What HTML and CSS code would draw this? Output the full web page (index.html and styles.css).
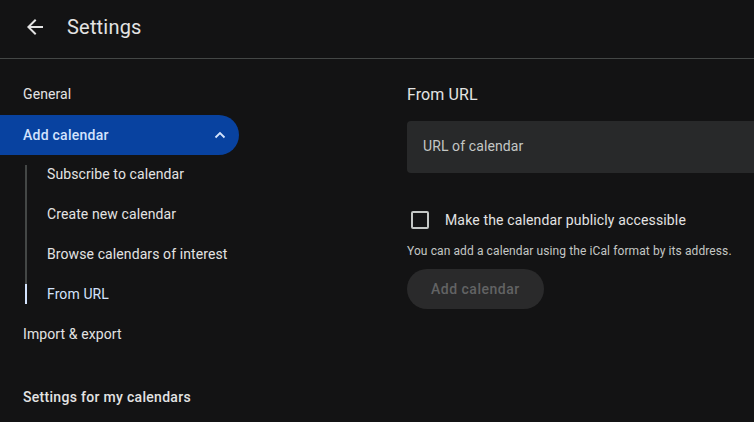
FILE: index.html
```html
<!DOCTYPE html>
<html lang="en">
<head>
<meta charset="utf-8">
<title>Settings</title>
<link rel="stylesheet" href="styles.css">
</head>
<body>
<header class="topbar">
  <button class="back" aria-label="Back">
    <svg width="16" height="16" viewBox="0 0 16 16"><path d="M16 7H3.83l5.59-5.59L8 0 0 8l8 8 1.41-1.41L3.830 9H16z" fill="#e3e3e3"/></svg>
  </button>
  <h1 class="title">Settings</h1>
</header>
<div class="main">
  <nav class="sidebar">
    <div class="nav-item">General</div>
    <div class="nav-item active">
      <span>Add calendar</span>
      <svg class="chev" width="12" height="8" viewBox="0 0 12 8"><path d="M1.5 6.5 6 2l4.5 4.5" fill="none" stroke="#d3e3fd" stroke-width="1.8"/></svg>
    </div>
    <div class="sub-list">
      <div class="sub-item first">Subscribe to calendar</div>
      <div class="sub-item">Create new calendar</div>
      <div class="sub-item">Browse calendars of interest</div>
      <div class="sub-item current">From URL</div>
    </div>
    <div class="nav-item">Import &amp; export</div>
    <div class="nav-item section">Settings for my calendars</div>
  </nav>
  <section class="content">
    <h2 class="heading">From URL</h2>
    <div class="field">URL of calendar</div>
    <label class="check-row">
      <span class="checkbox"></span>
      <span class="check-label">Make the calendar publicly accessible</span>
    </label>
    <p class="helper">You can add a calendar using the iCal format by its address.</p>
    <button class="add-btn">Add calendar</button>
  </section>
</div>
</body>
</html>
```
FILE: styles.css
```css
html, body {
  margin: 0;
  padding: 0;
  background: #131314;
  color: #e3e3e3;
  font-family: Roboto, "Liberation Sans", sans-serif;
  letter-spacing: 0.1px;
  overflow: hidden;
}
.topbar {
  height: 53px;
  padding-bottom: 5px;
  border-bottom: 1px solid #444746;
  display: flex;
  align-items: center;
  padding-left: 19px;
}
.back {
  width: 32px;
  height: 32px;
  background: none;
  border: 0;
  padding: 0;
  display: flex;
  align-items: center;
  justify-content: center;
}
.title {
  margin: 0 0 0 16px;
  font-size: 20px;
  font-weight: 400;
  color: #e3e3e3;
  letter-spacing: 0.2px;
}
.main {
  display: flex;
}
.sidebar {
  width: 239px;
  padding-top: 15px;
  font-size: 14px;
}
.nav-item {
  height: 40px;
  display: flex;
  align-items: center;
  justify-content: space-between;
  padding: 0 13px 0 23px;
  color: #e3e3e3;
}
.nav-item.active {
  margin-top: 1px;
  background: #0842a0;
  color: #d3e3fd;
  border-radius: 0 20px 20px 0;
  font-weight: 500;
  letter-spacing: 0.25px;
}
.nav-item.section {
  margin-top: 23px;
  font-weight: 500;
  letter-spacing: 0.3px;
}
.sub-list {
  margin-left: 25px;
  margin-top: -1px;
}
.sub-item {
  position: relative;
  height: 40px;
  display: flex;
  align-items: center;
  padding-left: 22px;
  color: #e3e3e3;
}
.sub-item::before {
  content: "";
  position: absolute;
  left: 0;
  top: 0;
  bottom: 0;
  width: 2px;
  background: #444746;
}
.sub-item.first::before {
  top: 11px;
}
.sub-item.current {
  color: #d3e3fd;
}
.sub-item.current::before {
  top: 0;
  bottom: 30px;
}
.sub-item.current::after {
  content: "";
  position: absolute;
  left: 0;
  top: 10px;
  bottom: 10px;
  width: 2px;
  background: #d3e3fd;
}
.content {
  flex: 1;
  padding-left: 168px;
  padding-top: 24px;
}
.heading {
  margin: 0;
  font-size: 16px;
  font-weight: 400;
  line-height: 24px;
  color: #e3e3e3;
}
.field {
  margin-top: 14px;
  height: 52px;
  background: #28292a;
  border-radius: 4px 0 0 4px;
  display: flex;
  align-items: center;
  padding-left: 16px;
  padding-bottom: 2px;
  box-sizing: border-box;
  font-size: 14px;
  color: #c4c7c5;
}
.check-row {
  margin-top: 27px;
  height: 40px;
  display: flex;
  align-items: center;
}
.checkbox {
  width: 14px;
  height: 14px;
  border: 2px solid #c4c7c5;
  border-radius: 2px;
  margin-left: 4px;
}
.check-label {
  margin-left: 16px;
  font-size: 14px;
  color: #e3e3e3;
  letter-spacing: 0.15px;
}
.helper {
  margin: 3px 0 0;
  font-size: 12px;
  line-height: 16px;
  color: #c4c7c5;
  letter-spacing: 0.1px;
}
.add-btn {
  margin-top: 10px;
  height: 40px;
  padding: 0 24px;
  border: 0;
  border-radius: 20px;
  background: #2a2a2b;
  color: #626364;
  font-family: Roboto, "Liberation Sans", sans-serif;
  font-size: 14px;
  font-weight: 500;
  letter-spacing: 0.5px;
}
```
